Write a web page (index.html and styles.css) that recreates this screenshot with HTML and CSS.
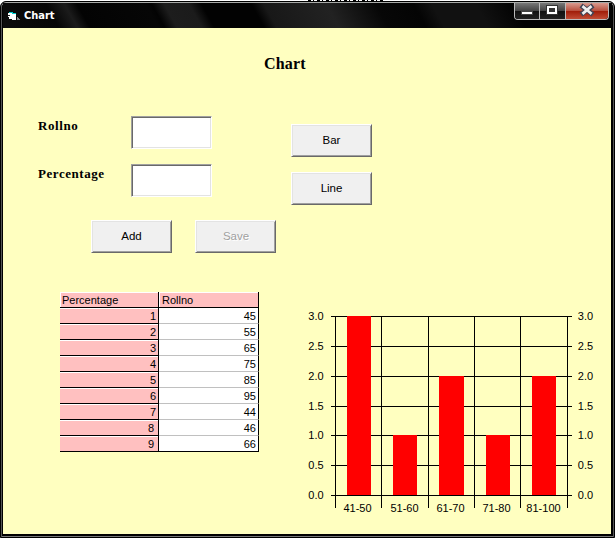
FILE: index.html
```html
<!DOCTYPE html>
<html lang="en">
<head>
<meta charset="utf-8">
<title>Chart</title>
<link rel="stylesheet" href="styles.css">
</head>
<body>
<div class="window">
  <header class="titlebar">
    <svg class="app-icon" width="14" height="12" viewBox="0 0 14 12" shape-rendering="crispEdges">
      <path d="M0 2h8v7h-4v-1h-3v-2h-1z" fill="#fff"/>
      <path d="M1 1h4v1h3v1h-4v-1h-3z" fill="#0cc"/>
      <path d="M0 4h2v1h-2z" fill="#222"/>
      <path d="M9 6h1v1h1v1h1v1h-3z" fill="#888"/>
    </svg>
    <span class="caption">Chart</span>
    <div class="controls">
      <span class="control minimize"><svg width="24" height="16" viewBox="0 0 24 16" shape-rendering="crispEdges"><path d="M6 8h12v4h-12z" fill="#444"/><path d="M7 9h10v2h-10z" fill="#fff"/></svg></span>
      <span class="control maximize"><svg width="24" height="16" viewBox="0 0 24 16" shape-rendering="crispEdges"><path d="M6 2h12v10h-12z" fill="#333"/><path d="M8 4h8v6h-8z" fill="none" stroke="#fff" stroke-width="2"/></svg></span>
      <span class="control close"><svg width="42" height="16" viewBox="0 0 42 16"><path d="M17 4l8 6M25 4l-8 6" stroke="#445" stroke-width="5" stroke-linecap="square"/><path d="M17.500 4l7 6M24.500 4l-7 6" stroke="#eee" stroke-width="2.700" stroke-linecap="square"/></svg></span>
    </div>
  </header>
  <main class="content">
    <h1 class="title">Chart</h1>
    <div class="form">
      <div class="fields">
        <label class="field"><span class="label rollno">Rollno</span><input class="input"></label>
        <label class="field"><span class="label percentage">Percentage</span><input class="input"></label>
      </div>
      <div class="chart-buttons">
        <button class="button">Bar</button>
        <button class="button">Line</button>
      </div>
    </div>
    <div class="actions">
      <button class="button">Add</button>
      <button class="button save" disabled>Save</button>
    </div>
    <div class="results">
      <div class="grid">
        <span class="cell head">Percentage</span><span class="cell head">Rollno</span>
        <span class="cell fixed">1</span><span class="cell">45</span>
        <span class="cell fixed">2</span><span class="cell">55</span>
        <span class="cell fixed">3</span><span class="cell">65</span>
        <span class="cell fixed">4</span><span class="cell">75</span>
        <span class="cell fixed">5</span><span class="cell">85</span>
        <span class="cell fixed">6</span><span class="cell">95</span>
        <span class="cell fixed">7</span><span class="cell">44</span>
        <span class="cell fixed wide">8</span><span class="cell">46</span>
        <span class="cell fixed wide last">9</span><span class="cell last">66</span>
      </div>
      <svg class="chart" width="300" height="210" viewBox="300 306 300 210">
        <path class="lines" d="M331 316.500h241M331 346.500h241M331 376.500h241M331 406.500h241M331 435.500h241M331 465.500h241M331 495.500h241M335.500 316v192M381.500 316v192M428.500 316v192M474.500 316v192M520.500 316v192M567.500 316v192"/>
        <path class="bars" d="M347 316h24v179h-24zM393 435h24v60h-24zM439 376h25v119h-25zM486 435h24v60h-24zM532 376h24v119h-24z"/>
        <g class="axis">
          <text x="316" y="320">3.0</text><text x="316" y="350">2.5</text><text x="316" y="380">2.0</text><text x="316" y="410">1.5</text><text x="316" y="439">1.0</text><text x="316" y="469">0.5</text><text x="316" y="499">0.0</text>
          <text x="585.500" y="320">3.0</text><text x="585.500" y="350">2.5</text><text x="585.500" y="380">2.0</text><text x="585.500" y="410">1.5</text><text x="585.500" y="439">1.0</text><text x="585.500" y="469">0.5</text><text x="585.500" y="499">0.0</text>
          <text x="357.500" y="512">41-50</text><text x="404.500" y="512">51-60</text><text x="450.500" y="512">61-70</text><text x="496.500" y="512">71-80</text><text x="543.500" y="512">81-100</text>
        </g>
      </svg>
    </div>
  </main>
</div>
</body>
</html>
```
FILE: styles.css
```css
* { box-sizing: border-box; }
body {
  margin: 0;
  height: 539px;
  padding: 1px 0;
  overflow: hidden;
  background: repeating-linear-gradient(90deg, #000 0 3px, #fff 3px 5px, #000 5px 6px, #fff 6px 9px) 308px 0 / 77px 1px no-repeat #fff;
  font: 11px/13px "Liberation Sans", Arial, sans-serif;
  color: #000;
}
.window {
  width: 615px;
  height: 537px;
  border: 1px solid #000;
  border-radius: 6px 6px 0 0;
  background: #000;
  box-shadow: inset 0 1px #a8aaa8, inset 1px 0 #555, inset -1px 0 #555, inset 0 -1px #777;
  padding: 0 2px;
}
.titlebar {
  height: 26px;
  display: flex;
  align-items: flex-start;
  padding: 0 3px 0 5px;
  background: linear-gradient(61deg, #0c0c0c 0, #060606 9%, #1b1b1b 12%, #030303 14%, #060606 25%, #030303 26%, #1d1d1d 28%, #1b1b1b 32%, #020202 34%, #020202 42%, #181818 44%, #222 54%, #070707 62%, #040404 68%, #111 71%, #111 78%, #030303 84%);
  border-top: 1px solid transparent;
  background-clip: padding-box;
}
.app-icon { margin-top: 8px; }
.caption {
  margin: 6px 0 0 2px;
  font: bold 11px/14px "DejaVu Sans Condensed", "DejaVu Sans", sans-serif;
  font-stretch: condensed;
  color: #fff;
}
.controls {
  display: flex;
  margin-left: auto;
  height: 17px;
  border: 1px solid #bbb;
  border-top: 0;
  border-radius: 0 0 4px 4px;
  overflow: hidden;
}
.control {
  height: 16px;
  background: linear-gradient(#777, #444 48%, #111 52%, #222);
  border-right: 1px solid #bbb;
}
.control svg { display: block; }
.maximize { padding-right: 1px; }
.close {
  border-right: 0;
  background: linear-gradient(#d99a8e, #b9503e 48%, #a11d09 52%, #c14c35);
}
.content {
  height: 506px;
  width: 608px;
  background: #ffffc0;
  overflow: hidden;
}
.title {
  margin: 25px 0 0 261px;
  height: 22px;
  font: bold 16px/22px "Liberation Serif", serif;
  letter-spacing: .2px;
}
.form {
  display: flex;
  align-items: flex-start;
  gap: 79px;
  margin: 41px 0 0 34px;
}
.fields, .chart-buttons {
  display: grid;
  gap: 15px;
}
.chart-buttons { padding-top: 8px; }
.field { display: flex; }
.label {
  width: 94px;
  padding: 2px 0 0 1px;
  font: bold 13px/16px "Liberation Serif", serif;
}
.rollno { letter-spacing: .6px; }
.percentage { letter-spacing: .55px; }
.input {
  width: 81px;
  height: 33px;
  padding: 0 3px;
  background: #fff;
  border: 1px solid;
  border-color: #a0a0a0 #fff #fff #a0a0a0;
  box-shadow: inset 1px 1px #696969, inset -1px -1px #e3e3e3;
}
.button {
  display: block;
  width: 81px;
  height: 33px;
  padding: 0 0 2px;
  font: 11.5px/14px "Liberation Sans", Arial, sans-serif;
  color: #000;
  background: #f0f0f0;
  border: 1px solid;
  border-color: #fff #696969 #696969 #fff;
  box-shadow: inset 1px 1px #e3e3e3, inset -1px -1px #a0a0a0;
}
.button:disabled {
  color: #a0a0a0;
  text-shadow: 1px 1px #fff;
}
.save { padding-left: 1px; }
.actions {
  display: flex;
  gap: 23px;
  margin: 15px 0 0 88px;
}
.results {
  display: flex;
  align-items: flex-start;
  margin: 39px 0 0 57px;
}
.grid {
  display: grid;
  grid-template-columns: 99px 100px;
  grid-auto-rows: 16px;
  width: 199px;
}
.cell {
  padding: 2px 2px 0 2px;
  text-align: right;
  background: #fff;
  border-right: 1px solid #000;
  border-bottom: 1px solid #c0c0c0;
}
.head, .fixed {
  background: #ffc0c0;
  border-bottom-color: #000;
  box-shadow: inset 0 1px #fff;
}
.head {
  text-align: left;
  box-shadow: inset 1px 1px #fff;
}
.head + .head { padding-left: 3px; }
.wide { padding-right: 4px; }
.last { border-bottom-color: #000; }
.chart { margin: 14px 0 0 41px; }
.lines { stroke: #000; fill: none; }
.bars { fill: #f00; }
.lines, .bars { shape-rendering: crispEdges; }
.axis {
  font-size: 11px;
  text-anchor: middle;
}
```
